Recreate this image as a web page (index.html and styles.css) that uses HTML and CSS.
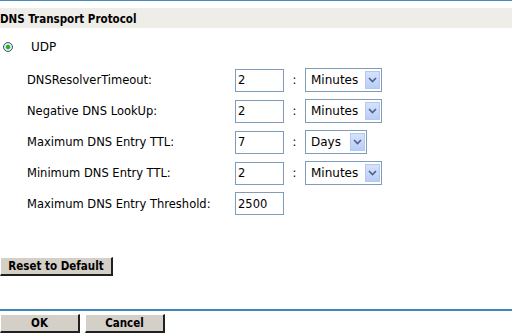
FILE: index.html
```html
<!DOCTYPE html>
<html>
<head>
<meta charset="utf-8">
<link rel="stylesheet" href="styles.css">
</head>
<body>
<div class="page">
  <div class="topline"></div>
  <div class="header">DNS Transport Protocol</div>
  <label class="radio-row"><input type="radio" class="radio" name="proto" checked><span>UDP</span></label>
  <div class="form">
    <span class="lbl">DNSResolverTimeout:</span>
    <input class="txt" type="text" value="2">
    <span class="colon">:</span>
    <span class="sel w77"><select><option>Minutes</option></select><span class="drop"><svg width="9" height="6" viewBox="0 0 9 6"><path d="M1 1 L4.5 4.5 L8 1" fill="none" stroke="#4d6185" stroke-width="1.6"/></svg></span></span>

    <span class="lbl">Negative DNS LookUp:</span>
    <input class="txt" type="text" value="2">
    <span class="colon">:</span>
    <span class="sel w77"><select><option>Minutes</option></select><span class="drop"><svg width="9" height="6" viewBox="0 0 9 6"><path d="M1 1 L4.5 4.5 L8 1" fill="none" stroke="#4d6185" stroke-width="1.6"/></svg></span></span>

    <span class="lbl">Maximum DNS Entry TTL:</span>
    <input class="txt" type="text" value="7">
    <span class="colon">:</span>
    <span class="sel w62"><select><option>Days</option></select><span class="drop"><svg width="9" height="6" viewBox="0 0 9 6"><path d="M1 1 L4.5 4.5 L8 1" fill="none" stroke="#4d6185" stroke-width="1.6"/></svg></span></span>

    <span class="lbl">Minimum DNS Entry TTL:</span>
    <input class="txt" type="text" value="2">
    <span class="colon">:</span>
    <span class="sel w77"><select><option>Minutes</option></select><span class="drop"><svg width="9" height="6" viewBox="0 0 9 6"><path d="M1 1 L4.5 4.5 L8 1" fill="none" stroke="#4d6185" stroke-width="1.6"/></svg></span></span>

    <span class="lbl">Maximum DNS Entry Threshold:</span>
    <input class="txt" type="text" value="2500">
    <span></span>
    <span></span>
  </div>
  <button class="btn reset" type="button">Reset to Default</button>
  <div class="bottomline"></div>
  <div class="actions">
    <button class="btn act" type="button">OK</button>
    <button class="btn act" type="button">Cancel</button>
  </div>
</div>
</body>
</html>
```
FILE: styles.css
```css
html, body {
  margin: 0;
  padding: 0;
  background: #ffffff;
}
body {
  font-family: "DejaVu Sans", Verdana, sans-serif;
  font-size: 11.5px;
  color: #000;
  width: 512px;
  height: 333px;
  overflow: hidden;
}
.page {
  display: flex;
  flex-direction: column;
}
.topline {
  height: 1px;
  background: #4a8ab8;
}
.header {
  box-sizing: border-box;
  margin-top: 7px;
  height: 20px;
  padding-top: 3px;
  line-height: 17px;
  background: #eeede8;
  font: bold 11.5px/17px "DejaVu Sans Condensed", "DejaVu Sans", sans-serif;
}
.radio-row {
  display: flex;
  align-items: center;
  gap: 18px;
  height: 20px;
  margin-top: 9px;
  padding-left: 3px;
  font-size: 12px;
}
.radio {
  appearance: none;
  -webkit-appearance: none;
  margin: 0;
  width: 10px;
  height: 10px;
  border-radius: 50%;
  border: 1px solid #2a5a8c;
  background: radial-gradient(circle, #24b324 0 1.8px, #9fd89f 2.3px, #f0f0ea 2.8px, #dcdcd4 5px);
  box-sizing: border-box;
}
.form {
  display: grid;
  grid-template-columns: 208px 49px 21px auto;
  row-gap: 7px;
  align-items: center;
  margin-top: 11px;
  padding-left: 27px;
}
.lbl {
  color: #000;
  white-space: nowrap;
}
.txt {
  box-sizing: border-box;
  width: 49px;
  height: 23px;
  margin: 0;
  border: 1px solid #7f9db9;
  padding: 0 2px;
  font: 11.5px "DejaVu Sans", Verdana, sans-serif;
  color: #000;
  outline: none;
}
.colon {
  text-align: center;
}
.sel {
  position: relative;
  display: inline-block;
  height: 24px;
  justify-self: start;
}
.sel.w77 { width: 77px; }
.sel.w62 { width: 62px; }
.sel select {
  appearance: none;
  -webkit-appearance: none;
  box-sizing: border-box;
  width: 100%;
  height: 24px;
  margin: 0;
  border: 1px solid #7f9db9;
  border-radius: 0;
  background: #fff;
  padding: 0 0 0 5px;
  font: 12px "DejaVu Sans", Verdana, sans-serif;
  color: #000;
}
.drop {
  position: absolute;
  right: 2px;
  top: 3px;
  width: 15px;
  height: 18px;
  box-sizing: border-box;
  border: 1px solid #b5c8f0;
  background: linear-gradient(#d6e2fc, #b9cdf7);
  display: flex;
  align-items: center;
  justify-content: center;
  pointer-events: none;
}
.btn {
  box-sizing: border-box;
  margin: 0;
  background: #d4d0c8;
  border-style: solid;
  border-width: 1px 2px 2px 1px;
  border-color: #ffffff #202020 #202020 #ffffff;
  border-radius: 0;
  font: bold 11.5px "DejaVu Sans Condensed", "DejaVu Sans", sans-serif;
  color: #000;
  padding: 0;
  height: 19px;
}
.reset {
  align-self: flex-start;
  width: 113px;
  margin-top: 42px;
}
.bottomline {
  height: 2px;
  background: #3f87b9;
  margin-top: 33px;
}
.actions {
  display: flex;
  gap: 5px;
  margin-top: 3px;
}
.act {
  width: 80px;
}
```
